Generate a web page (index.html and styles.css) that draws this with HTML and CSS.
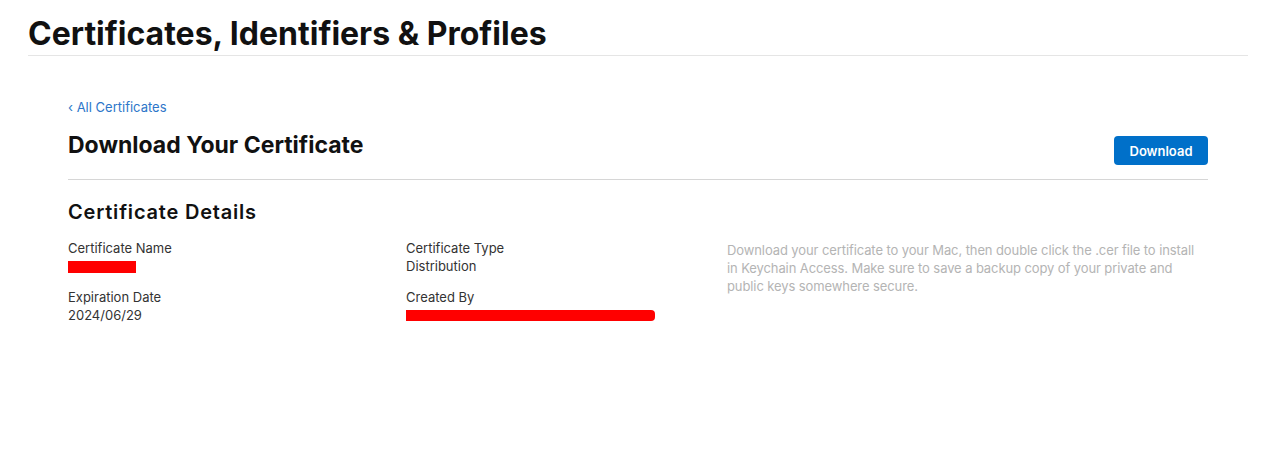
FILE: index.html
```html
<!DOCTYPE html>
<html lang="en">

<head>
    <meta charset="UTF-8">
    <meta name="viewport" content="width=device-width, initial-scale=1.0">
    <title>Download Your Certificate</title>
    <link rel="stylesheet" href="styles.css">
</head>

<body>
    <header class="page-header">
        <h1>Certificates, Identifiers &amp; Profiles</h1>
    </header>

    <main class="content">
        <a class="back-link" href="#">&lsaquo; All Certificates</a>

        <div class="title-row">
            <h2>Download Your Certificate</h2>
            <button class="btn-download">Download</button>
        </div>

        <!-- Детали сертификата -->
        <section class="details">
            <h3>Certificate Details</h3>
            <div class="details-grid">
                <div class="col">
                    <div class="field">
                        <span class="label">Certificate Name</span>
                        <span class="value"><span class="redact redact-name"></span></span>
                    </div>
                    <div class="field">
                        <span class="label">Expiration Date</span>
                        <span class="value">2024/06/29</span>
                    </div>
                </div>
                <div class="col">
                    <div class="field">
                        <span class="label">Certificate Type</span>
                        <span class="value">Distribution</span>
                    </div>
                    <div class="field">
                        <span class="label">Created By</span>
                        <span class="value"><span class="redact redact-creator"></span></span>
                    </div>
                </div>
                <p class="note">Download your certificate to your Mac, then double click the .cer file to install in Keychain Access. Make sure to save a backup copy of your private and public keys somewhere secure.</p>
            </div>
        </section>
    </main>
</body>

</html>
```

FILE: styles.css
```css
* {
    margin: 0;
    padding: 0;
    box-sizing: border-box;
}

html, body {
    height: 100%;
    overflow: hidden;
    font-family: Inter, "Noto Sans", sans-serif;
    color: #111;
    background: #fff;
}

/* Шапка */
.page-header {
    margin: 0 21px 0 28px;
    padding-top: 15px;
    border-bottom: 1px solid #e5e5e5;
    height: 56px;
}

.page-header h1 {
    font-size: 32px;
    font-weight: 700;
    line-height: 38px;
}

/* Основной блок */
.content {
    margin: 0 61px 0 68px;
    padding-top: 43px;
}

.back-link {
    display: block;
    font-size: 13px;
    line-height: 16px;
    color: #2d76c9;
    text-decoration: none;
}

.title-row {
    display: flex;
    justify-content: space-between;
    align-items: flex-start;
    padding-top: 15px;
    height: 65px;
    border-bottom: 1px solid #d6d6d6;
}

.title-row h2 {
    font-size: 23px;
    font-weight: 700;
    line-height: 30px;
}

.btn-download {
    margin-top: 6px;
    width: 94px;
    height: 29px;
    border: none;
    border-radius: 4px;
    background: #0070c9;
    color: #fff;
    font-family: inherit;
    font-size: 13px;
    font-weight: 600;
    cursor: pointer;
}

/* Детали */
.details h3 {
    margin-top: 20px;
    font-size: 20px;
    font-weight: 600;
    letter-spacing: 0.8px;
    line-height: 24px;
}

.details-grid {
    display: grid;
    grid-template-columns: 338px 321px 1fr;
    margin-top: 15px;
}

.col {
    display: flex;
    flex-direction: column;
    gap: 13px;
}

.field {
    display: flex;
    flex-direction: column;
    font-size: 13px;
    line-height: 18px;
    color: #333;
}

.value {
    height: 18px;
}

.redact {
    display: inline-block;
    background: #ff0000;
    vertical-align: top;
}

.redact-name {
    width: 68px;
    height: 12px;
    margin-top: 4px;
}

.redact-creator {
    width: 249px;
    height: 11px;
    margin-top: 4px;
    border-radius: 0 4px 4px 0;
}

.note {
    font-size: 13px;
    line-height: 18px;
    letter-spacing: -0.1px;
    color: #b4b4b4;
    padding-top: 2px;
}
```
